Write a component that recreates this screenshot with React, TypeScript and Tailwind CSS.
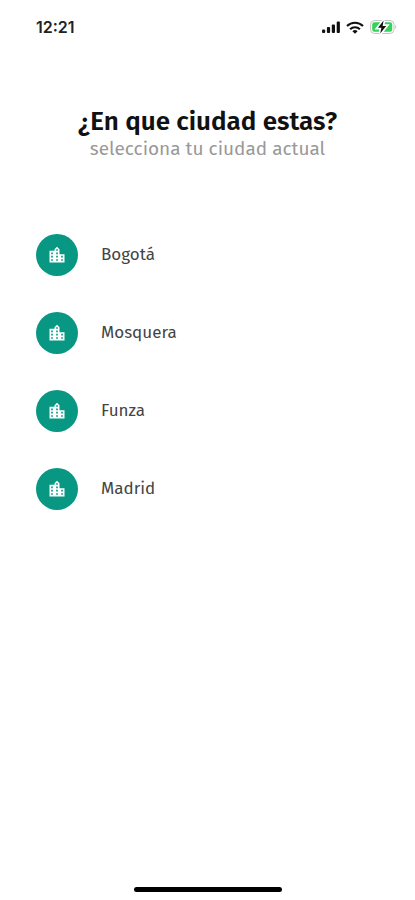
import { MdLocationCity } from "react-icons/md";

const cities = ["Bogotá", "Mosquera", "Funza", "Madrid"];

const StatusBar = () => {
  return (
    <header className="flex items-center justify-between pt-[15px] pl-9 pr-[18px]">
      <time className="font-['Inter',sans-serif] text-base leading-6 font-semibold text-[#222]">
        12:21
      </time>
      <div className="flex items-center gap-1.5">
        {/* signal */}
        <svg viewBox="0 0 18 12" className="w-[18px] h-3" fill="#111">
          <rect x="0" y="8.4" width="3.2" height="3.6" rx="1" />
          <rect x="4.9" y="6" width="3.2" height="6" rx="1" />
          <rect x="9.8" y="3.4" width="3.2" height="8.6" rx="1" />
          <rect x="14.7" y=".6" width="3.2" height="11.4" rx="1" />
        </svg>
        {/* wifi */}
        <svg
          viewBox="0 0 18 13"
          className="w-[18px] h-[13px]"
          fill="none"
          stroke="#111"
          strokeWidth="2.1"
        >
          <path d="M1 5a11.4 11.4 0 0 1 16 0" />
          <path d="M4.1 8.2a7 7 0 0 1 9.8 0" />
          <path d="M9 12.8 6.4 10.2a3.7 3.7 0 0 1 5.2 0z" fill="#111" stroke="none" />
        </svg>
        {/* battery */}
        <svg viewBox="0 0 27 14" className="w-[27px] h-3.5">
          <rect x=".5" y=".5" width="23.5" height="13" rx="4" fill="#fff" stroke="#c4c4c4" />
          <rect x="2.2" y="2.2" width="20" height="9.6" rx="2.2" fill="#35d15b" />
          <path d="M25.2 4.8v4.4c1.4-.6 1.4-3.8 0-4.4z" fill="#c4c4c4" />
          <path
            d="M13.6.6 8 7.8h3.4l-1.2 5.6 6-7.4h-3.6z"
            fill="#111"
            stroke="#fff"
            strokeWidth="3.4"
            paintOrder="stroke"
          />
        </svg>
      </div>
    </header>
  );
};

const CityList = () => {
  return (
    <ul className="mt-[72px] px-9 space-y-9">
      {cities.map((city) => (
        <li key={city}>
          <button type="button" className="flex items-center w-full gap-[23px] text-left">
            <span className="flex items-center justify-center w-[42px] h-[42px] rounded-full bg-[#079783] text-white">
              <MdLocationCity className="w-5 h-5" />
            </span>
            <span className="text-[17px] leading-6 text-[#444]">{city}</span>
          </button>
        </li>
      ))}
    </ul>
  );
};

const App = () => {
  return (
    <div className="flex flex-col min-h-screen bg-white font-['Fira_Sans','Noto_Sans',sans-serif]">
      <StatusBar />

      <main className="flex-1 pt-[69px]">
        <div className="text-center">
          <h1 className="text-[26px] leading-7 font-semibold text-[#111]">¿En que ciudad estas?</h1>
          <p className="text-[19px] leading-[26px] text-[#999]">selecciona tu ciudad actual</p>
        </div>
        <CityList />
      </main>

      <div className="self-center w-[148px] h-[5px] mb-2 rounded-full bg-black" />
    </div>
  );
};

export default App;
